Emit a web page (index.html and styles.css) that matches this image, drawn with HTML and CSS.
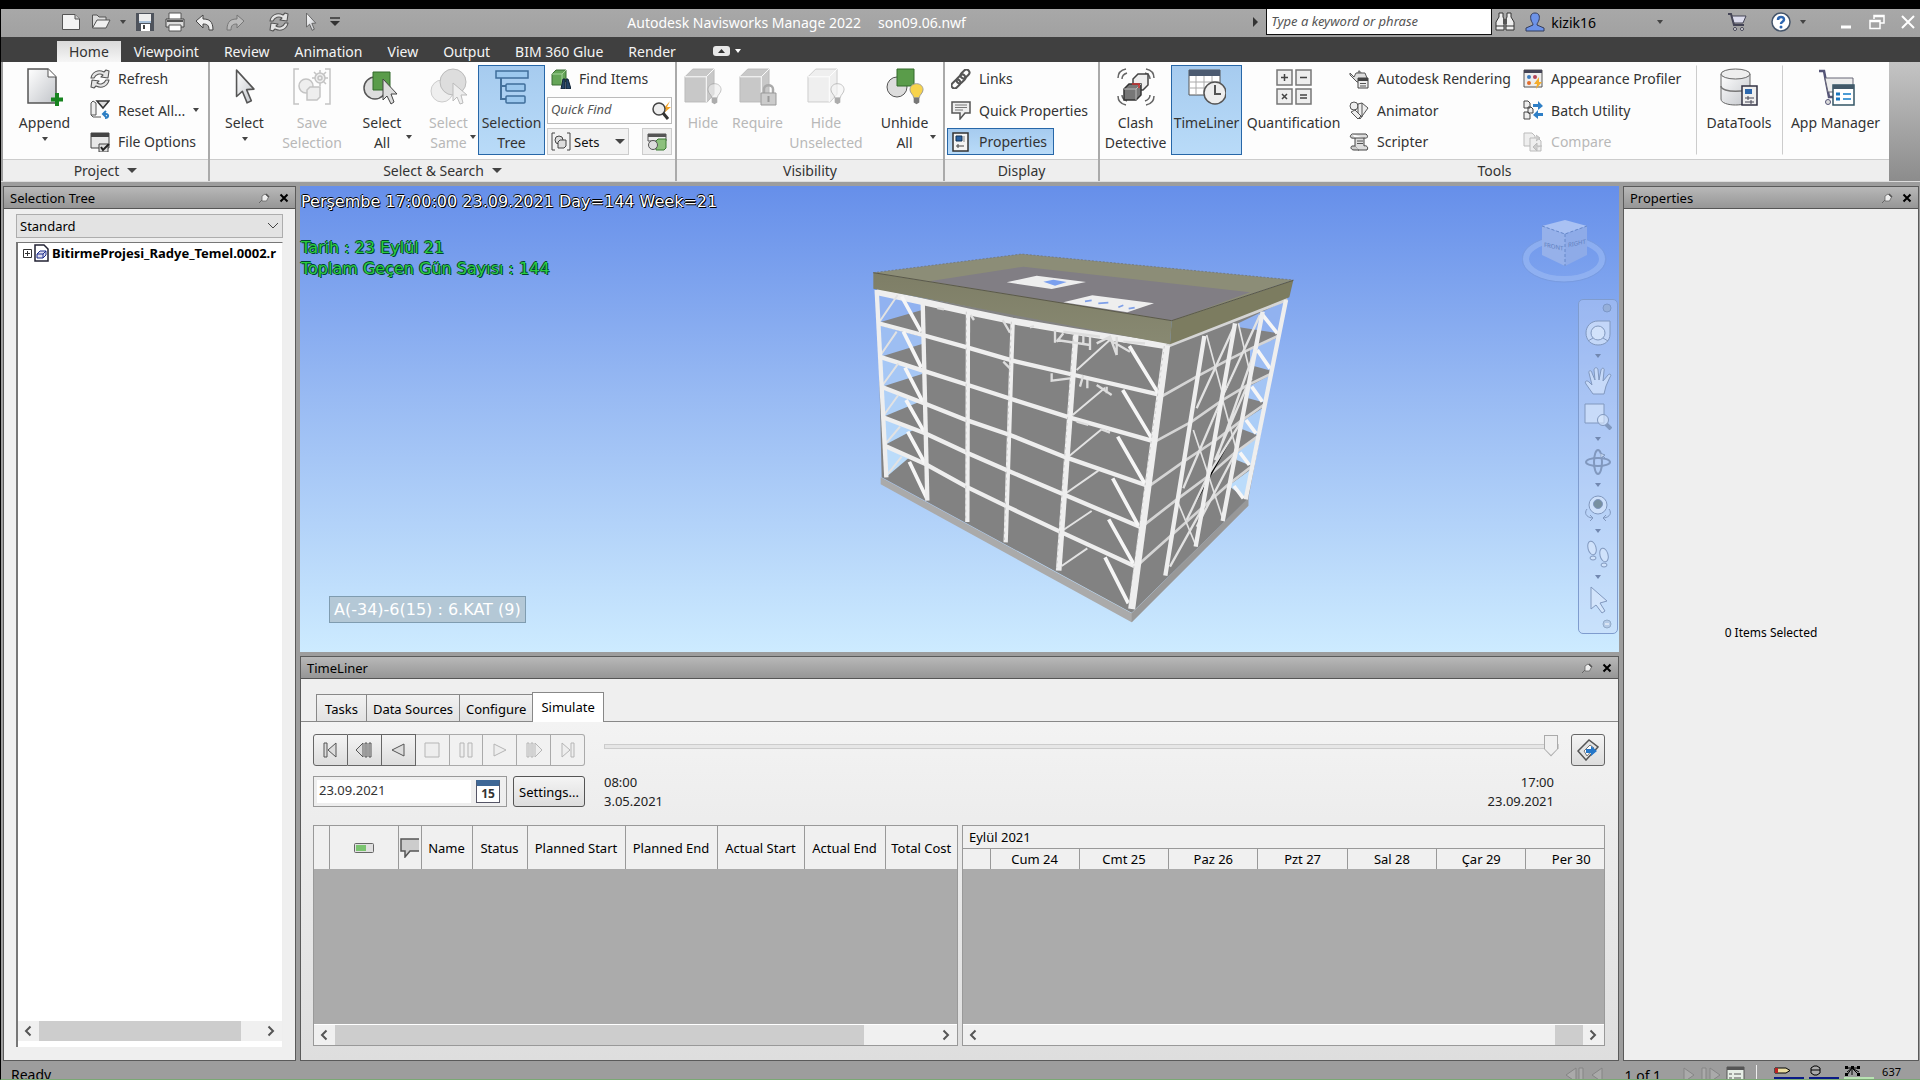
FILE: index.html
```html
<!DOCTYPE html>
<html lang="en">
<head>
    <meta charset="UTF-8">
    <meta name="viewport" content="width=device-width, initial-scale=1.0">
    <title>Autodesk Navisworks Manage 2022</title>
    <link rel="stylesheet" href="styles.css">
</head>

<body>
    <!-- shared icons -->
    <svg class="defs" width="0" height="0">
        <defs>
            <linearGradient id="steel" x1="0" y1="0" x2="1" y2="1">
                <stop offset="0" stop-color="#fff"/><stop offset="1" stop-color="#c2c5ca"/>
            </linearGradient>
            <linearGradient id="olive" x1="0" y1="0" x2="0" y2="1">
                <stop offset="0" stop-color="#7e7e66"/><stop offset="1" stop-color="#888972"/>
            </linearGradient>
        </defs>
        <symbol id="refresh" viewBox="0 0 20 20">
            <g fill="#e4e4e4" stroke="#555" stroke-width="1.1" stroke-linejoin="round">
                <path d="M1 9C2 3 8 0 14 3L16 1L19 2L18 9L11 8L13 6C10 4 6 5 4 9Z"/>
                <path d="M19 11C18 17 12 20 6 17L4 19L1 18L2 11L9 12L7 14C10 16 14 15 16 11Z"/>
            </g>
        </symbol>
        <symbol id="cursor" viewBox="0 0 20 36">
            <path d="M2 2L2 27L7.500 22L12 33L16 31L11.500 20.500L18.500 20Z" fill="url(#steel)" stroke="#555" stroke-width="1.500" stroke-linejoin="round"/>
        </symbol>
        <symbol id="pin" viewBox="0 0 12 12">
            <path d="M1 11L4.500 7.500" stroke="#666" stroke-width="1"/>
            <path d="M4 4L7 2L10.500 5L8.500 9L4 9Z" fill="#eee" stroke="#666" stroke-width=".8"/>
            <path d="M8 2L11 5" stroke="#555" stroke-width="1.500"/>
        </symbol>
        <symbol id="close" viewBox="0 0 10 10">
            <path d="M1.500 1.500L8.500 8.500M8.500 1.500L1.500 8.500" stroke="#000" stroke-width="2"/>
        </symbol>
        <symbol id="bulb" viewBox="0 0 16 24">
            <path d="M8 1C3.500 1 1 4 1 7.500C1 11 5 13 5 16H11C11 13 15 11 15 7.500C15 4 12.500 1 8 1Z" stroke="#999"/>
            <path d="M5 16H11V21L8 23L5 21Z" fill="#777"/>
        </symbol>
        <symbol id="cube" viewBox="0 0 32 36">
            <path d="M1 9L9 1H31V27L24 35H1Z" stroke-linejoin="round"/>
            <path d="M1 9H23M23 9L31 1M23 9V35" fill="none" stroke="#fff"/>
        </symbol>
        <symbol id="left" viewBox="0 0 10 12">
            <path d="M7.500 1.500L3 6L7.500 10.500" fill="none" stroke="#555" stroke-width="2"/>
        </symbol>
        <symbol id="right" viewBox="0 0 10 12">
            <path d="M2.500 1.500L7 6L2.500 10.500" fill="none" stroke="#555" stroke-width="2"/>
        </symbol>
    </svg>

    <header class="titlebar">
        <div class="quick">
            <button class="tool" aria-label="New"><svg width="20" height="20"><path d="M1.500 2.500H14L18.500 7V17.500H1.500Z" fill="#f4f4f4" stroke="#555"/><path d="M14 2.500V7H18.500" fill="#ccc" stroke="#555"/></svg></button>
            <button class="tool" aria-label="Open"><svg width="20" height="20"><path d="M1.500 16V3H6L8 5H15V8" fill="#ddd" stroke="#555"/><path d="M1.500 16L6 8H19L15 16Z" fill="#f0f0f0" stroke="#555"/></svg></button>
            <span class="caret open-caret"></span>
            <button class="tool" aria-label="Save"><svg width="20" height="20"><path d="M1 1H19V19H1Z" fill="#4e535c"/><path d="M4 2H16V9H4Z" fill="#eee"/><path d="M6 12H15V19H6Z" fill="#fff"/><path d="M8 13H10V17H8Z" fill="#444"/><path d="M4 9H16V11H4Z" fill="#a8c0d8"/></svg></button>
            <button class="tool" aria-label="Print"><svg width="20" height="20"><path d="M4 1H16V8H4Z" fill="#fff" stroke="#555"/><path d="M1 7H19V15H1Z" fill="#ddd" stroke="#444"/><path d="M4 13H16V19H4Z" fill="#fff" stroke="#555"/><path d="M2 9H18" stroke="#555" stroke-width="2"/></svg></button>
            <button class="tool" aria-label="Undo"><svg width="20" height="20"><path d="M1 9L8 3V7C14 7 18 9 18 18H14C14 13 12 12 8 12V16Z" fill="#eee" stroke="#444"/></svg></button>
            <button class="tool" aria-label="Redo"><svg width="20" height="20"><path d="M19 9L12 3V7C6 7 2 9 2 18H6C6 13 8 12 12 12V16Z" fill="#bbb" stroke="#777"/></svg></button>
            <button class="tool refresh-tool" aria-label="Refresh"><svg width="20" height="20"><use href="#refresh"/></svg></button>
            <button class="tool" aria-label="Select"><svg width="24" height="20"><use href="#cursor"/></svg></button>
            <button class="tool customize" aria-label="Customize"><svg width="12" height="12"><path d="M1 2H11" stroke="#333" stroke-width="1.500"/><path d="M1 5H11L6 10Z" fill="#333"/></svg></button>
        </div>
        <h1 class="title"><span>Autodesk Navisworks Manage 2022</span><span>son09.06.nwf</span></h1>
        <div class="account">
            <svg width="8" height="12"><path d="M1 1L6 6L1 11Z" fill="#333"/></svg>
            <input class="keyword" type="search" placeholder="Type a keyword or phrase" aria-label="Keyword or phrase">
            <button class="tool" aria-label="Search"><svg width="20" height="20"><path d="M4 1H8V5L9 7V18H1V10L4 5ZM12 1H16V5L19 10V18H11V7L12 5Z" fill="#eee" stroke="#333"/><path d="M8 7H12V12H8Z" fill="#555"/><path d="M1 14H9M11 14H19" stroke="#333"/></svg></button>
            <button class="user"><svg width="20" height="20"><path d="M10 1C6 1 5 4 6 8C6.500 10 8 11 8 13L1 16V19H19V16L12 13C12 11 13.500 10 14 8C15 4 14 1 10 1Z" fill="#6d93e8" stroke="#333c5c"/></svg>kizik16</button>
            <span class="caret user-caret"></span>
            <button class="tool" aria-label="App store"><svg width="20" height="20"><path d="M1 2H4L7 13H17" fill="none" stroke="#445" stroke-width="2"/><path d="M5 4H19L16 11H7Z" fill="#dde" stroke="#445"/><circle cx="8" cy="17" r="1.500" fill="#eee" stroke="#445"/><circle cx="15" cy="17" r="1.500" fill="#eee" stroke="#445"/></svg></button>
            <button class="tool help" aria-label="Help"><svg width="20" height="20"><circle cx="10" cy="10" r="9" fill="#fff" stroke="#44546a" stroke-width="1.500"/><path d="M7 8C7 4 13 4 13 7.500C13 10 10 9.500 10 12" fill="none" stroke="#2e66b0" stroke-width="2.500"/><circle cx="10" cy="15" r="1.500" fill="#2e66b0"/></svg></button>
            <span class="caret"></span>
            <button class="tool win" aria-label="Minimize"><svg width="16" height="16"><path d="M3 13H13" stroke="#fff" stroke-width="3"/></svg></button>
            <button class="tool win" aria-label="Restore"><svg width="16" height="16"><path d="M5 5V1.500H15V9H11M5 2.500H15M1 6.500H11V14.500H1ZM1 7.500H11" fill="none" stroke="#fff" stroke-width="1.500"/></svg></button>
            <button class="tool win" aria-label="Close"><svg width="16" height="16"><path d="M2 2L14 14M14 2L2 14" stroke="#fff" stroke-width="2"/></svg></button>
        </div>
    </header>

    <nav class="tabs">
        <a class="tab active" href="#home">Home</a>
        <a class="tab" href="#viewpoint">Viewpoint</a>
        <a class="tab" href="#review">Review</a>
        <a class="tab" href="#animation">Animation</a>
        <a class="tab" href="#view">View</a>
        <a class="tab" href="#output">Output</a>
        <a class="tab" href="#glue">BIM 360 Glue</a>
        <a class="tab" href="#render">Render</a>
        <button class="tool collapse" aria-label="Minimize ribbon"><svg width="28" height="10"><rect x="0" y="0" width="17" height="10" rx="3" fill="#e8e8e8"/><path d="M5 7L8.500 3L12 7Z" fill="#333"/><path d="M22 3H28L25 7Z" fill="#fff"/></svg></button>
    </nav>

    <div class="ribbon">
        <section class="group">
            <div class="group-body">
                <button class="big append">
                    <svg width="38" height="38"><path d="M2 1H22L30 9V35H2Z" fill="url(#steel)" stroke="#555" stroke-width="1.500"/><path d="M22 1V9H30" fill="#fff" stroke="#555"/><path d="M31 25V38M25 31.500H37" stroke="#17841f" stroke-width="4"/></svg>
                    <span>Append</span><i class="caret"></i>
                </button>
                <div class="stack">
                    <button class="small"><svg width="20" height="20"><use href="#refresh"/></svg>Refresh</button>
                    <button class="small"><svg width="20" height="20"><path d="M1 3L3 1L6 3V15H1Z" fill="#eee" stroke="#555"/><path d="M1 15L3 17H11" fill="none" stroke="#555"/><path d="M7 1H19L13 8Z" fill="#ddd" stroke="#333" stroke-width="1.500"/><path d="M13 14H16C19 14 19 18 15 18M16 11L13 14L16 17" fill="none" stroke="#2d7fc4" stroke-width="2"/></svg>Reset All...<i class="caret"></i></button>
                    <button class="small"><svg width="20" height="20"><path d="M1 1H19V16H1Z" fill="#e8e8e8" stroke="#444"/><path d="M1 1H19V5H1Z" fill="#444"/><path d="M9 12H18V20H9Z" fill="#ddd" stroke="#444"/><path d="M11 15L13 18L19 12" fill="none" stroke="#222" stroke-width="2"/></svg>File Options</button>
                </div>
            </div>
            <h2 class="group-name">Project<i class="caret wide"></i></h2>
        </section>

        <section class="group">
            <div class="group-body">
                <button class="big select"><svg width="38" height="38"><use href="#cursor"/></svg><span>Select</span><i class="caret"></i></button>
                <button class="big save-selection" disabled>
                    <svg width="38" height="38" fill="#eee" stroke="#c4c4c4" stroke-width="1.500"><path d="M6 1H1V36H6M32 1H37V36H32" fill="none"/><circle cx="13" cy="18" r="7"/><path d="M14 22L17 19H27V29L24 32H14Z"/><circle cx="27" cy="10" r="5"/><circle cx="27" cy="10" r="2"/><path d="M27 2V5M27 15V18M19 10H22M32 10H35M21 4L24 7M30 13L33 16M33 4L30 7"/></svg>
                    <span>Save<br>Selection</span>
                </button>
                <button class="big select-all">
                    <svg width="38" height="38"><circle cx="12" cy="20" r="11" fill="#ddd" stroke="#555" stroke-width="1.500"/><path d="M10 4H27V22H10Z" fill="#5a9c4a" stroke="#336b2a"/><path d="M20 11V32L24 28L28 36L31 34L28 26H34Z" fill="#ddd" stroke="#444"/></svg>
                    <span>Select<br>All</span><i class="caret side"></i>
                </button>
                <button class="big select-same" disabled>
                    <svg width="38" height="38"><circle cx="12" cy="23" r="11" fill="#eee" stroke="#ccc"/><circle cx="23" cy="14" r="13" fill="#ddd" stroke="#bbb"/><path d="M23 15V33L27 29L30 36L33 35L31 27H37Z" fill="#eee" stroke="#bbb"/></svg>
                    <span>Select<br>Same</span><i class="caret side"></i>
                </button>
                <button class="big tree on">
                    <svg width="38" height="38"><path d="M8 8V31H16M8 18H16" fill="none" stroke="#44719c" stroke-width="2"/><g fill="#9cc8ee" stroke="#3f6d9a" stroke-width="1.500"><rect x="3" y="3" width="32" height="7"/><rect x="13" y="16" width="19" height="7" rx="1"/><rect x="13" y="28" width="19" height="7" rx="1"/></g></svg>
                    <span>Selection<br>Tree</span>
                </button>
                <div class="search-tools">
                    <button class="small"><svg width="20" height="20"><path d="M1 5L5 1H15V12L11 16H1Z" fill="#65a558" stroke="#3b6c35"/><path d="M1 5H11L15 1M11 5V16" fill="none" stroke="#a8d29d"/><path d="M10 20L12 10H14V20ZM15 20V10H17L20 20Z" fill="#246" stroke="#123"/></svg>Find Items</button>
                    <div class="quick-find">
                        <input type="text" placeholder="Quick Find" aria-label="Quick Find">
                        <button class="tool" aria-label="Find"><svg width="20" height="20"><path d="M19 1L12 9H15L13 13L20 7H16Z" fill="#f3a52a"/><circle cx="8" cy="9" r="6" fill="#eee" stroke="#444" stroke-width="1.500"/><path d="M12 13L17 19" stroke="#333" stroke-width="3"/></svg></button>
                    </div>
                    <div class="sets-row">
                        <button class="sets"><svg width="20" height="20" fill="#ddd" stroke="#444"><path d="M4 1H1V18H4M16 1H19V18H16" fill="none"/><circle cx="8" cy="8" r="4"/><path d="M7 10L9 8H15V14L13 16H7Z"/></svg>Sets<i class="caret wide"></i></button>
                        <button class="inspector" aria-label="Selection inspector"><svg width="20" height="20"><path d="M1 2H19V9H1Z" fill="#eee" stroke="#555"/><path d="M1 2H19V5H1Z" fill="#555"/><path d="M9 9L11 7H19V16L17 18H9Z" fill="#8cc07c" stroke="#3c7a34"/><circle cx="6" cy="13" r="4.500" fill="#ddd" stroke="#555"/></svg></button>
                    </div>
                </div>
            </div>
            <h2 class="group-name">Select &amp; Search<i class="caret wide"></i></h2>
        </section>

        <section class="group">
            <div class="group-body">
                <button class="big hide" disabled><svg width="38" height="38"><use href="#cube" width="31" height="35" fill="#c8c8c8" stroke="#bbb"/><use href="#bulb" x="23" y="14" width="15" height="24" fill="#eee" opacity=".6"/></svg><span>Hide</span></button>
                <button class="big require" disabled><svg width="38" height="38"><use href="#cube" width="31" height="35" fill="#c8c8c8" stroke="#bbb"/><path d="M25 26V21C25 16 34 16 34 21V26" fill="none" stroke="#aaa" stroke-width="2.500"/><path d="M22 25H37V37H22Z" fill="#ccc" stroke="#999"/><path d="M29.500 28V34" stroke="#999" stroke-width="2"/></svg><span>Require</span></button>
                <button class="big unselected" disabled><svg width="38" height="38"><use href="#cube" width="31" height="35" fill="#efefef" stroke="#ccc"/><use href="#bulb" x="23" y="14" width="15" height="24" fill="#f6f6f6" opacity=".6"/></svg><span>Hide<br>Unselected</span></button>
                <button class="big unhide"><svg width="38" height="38"><circle cx="11" cy="19" r="10" fill="#ddd" stroke="#555"/><path d="M11 1H28V18H11Z" fill="#5a9c4a" stroke="#336b2a"/><use href="#bulb" x="23" y="14" width="15" height="24" fill="#f7d34c"/></svg><span>Unhide<br>All</span><i class="caret side"></i></button>
            </div>
            <h2 class="group-name">Visibility</h2>
        </section>

        <section class="group">
            <div class="group-body display">
                <div class="stack">
                    <button class="small"><svg width="20" height="20" fill="none" stroke="#555" stroke-width="2"><rect x="9" y="2" width="10" height="6" rx="3" transform="rotate(-45 14 5)"/><rect x="5" y="7" width="10" height="6" rx="3" transform="rotate(-45 10 10)"/><rect x="0" y="12" width="10" height="6" rx="3" transform="rotate(-45 5 15)"/></svg>Links</button>
                    <button class="small"><svg width="20" height="20"><path d="M1 2H19V13H14L9 19V13H1Z" fill="#eee" stroke="#555" stroke-width="1.500"/><path d="M4 5H16M4 7.500H16M4 10H12" stroke="#777"/></svg>Quick Properties</button>
                    <button class="small on"><svg width="20" height="20"><path d="M2 1H17V19H2Z" fill="#f4f4f4" stroke="#333" stroke-width="1.500"/><path d="M5 4H11V9H5Z" fill="#2b62a4" stroke="#135"/><path d="M13 4V10" stroke="#888"/><path d="M5 14H13M7 12V16" stroke="#444"/></svg>Properties</button>
                </div>
            </div>
            <h2 class="group-name">Display</h2>
        </section>

        <section class="group grow">
            <div class="group-body">
                <button class="big clash"><svg width="38" height="38"><g fill="none" stroke="#666" stroke-width="1.500"><path d="M1 10C1 5 4 2 9 1M5 11C5 8 7 6 10 5M37 10C37 5 34 2 29 1M33 11C33 8 31 6 28 5M1 28C1 33 4 36 9 37M5 27C5 30 7 32 10 33M37 28C37 33 34 36 29 37M33 27C33 30 31 32 28 33"/></g><path d="M16 11L21 6H31V17L26 22H16Z" fill="#eee" stroke="#444" stroke-width="1.500"/><path d="M7 21L12 16H24V27L19 32H7Z" fill="#777" stroke="#333" stroke-width="1.500"/><path d="M7 21H19L24 16M19 21V32" fill="none" stroke="#bbb"/><path d="M15 16H22V20" fill="none" stroke="#c33" stroke-width="1.500"/></svg><span>Clash<br>Detective</span></button>
                <button class="big timeliner on"><svg width="38" height="38"><path d="M1 2H32V27H1Z" fill="#fff" stroke="#555"/><path d="M1 2H32V8H1Z" fill="#4b5a70"/><path d="M1 14H32M1 20H32M8 8V27M16 8V27M24 8V27" stroke="#aaa"/><circle cx="27" cy="25" r="11" fill="#eee" stroke="#555" stroke-width="1.500"/><path d="M27 17V26H33" fill="none" stroke="#555" stroke-width="2"/></svg><span>TimeLiner</span></button>
                <button class="big quantification"><svg width="38" height="38"><g fill="#eee" stroke="#777" stroke-width="1.500"><path d="M2 2H17V17H2ZM21 2H36V17H21ZM2 21H17V36H2ZM21 21H36V36H21Z"/><path d="M9.500 6V13M6 9.500H13M25 9.500H32M7 26L12 31M12 26L7 31M25 27H32M25 30H32" stroke="#444"/></g></svg><span>Quantification</span></button>
                <div class="stack first">
                    <button class="small"><svg width="20" height="20"><path d="M1 4L5 8L7 4H16L18 9V13H8L1 6Z" fill="#ddd" stroke="#555"/><path d="M10 1L13 4H8Z" fill="#777"/><path d="M9 9H19V19H9Z" fill="#eee" stroke="#444"/><path d="M9 9H19V12H9Z" fill="#444"/><path d="M11 14.500H17M11 17H17" stroke="#555"/></svg>Autodesk Rendering</button>
                    <button class="small"><svg width="20" height="20" fill="#eee" stroke="#555"><circle cx="5" cy="6" r="4"/><path d="M9 4L13 3V17L9 15ZM13 3L19 8L11 19L6 14"/><path d="M2 12L6 10L12 16L9 19Z"/></svg>Animator</button>
                    <button class="small"><svg width="20" height="20"><path d="M3 2H17C20 4 18 7 16 6H6V14L9 18H18C20 15 17 13 15 14V6" fill="#ddd" stroke="#444"/><path d="M3 2C0 4 1 7 6 6M6 14H3C1 15 2 18 5 18H10" fill="#ccc" stroke="#444"/><path d="M8 9H14M8 11.500H14" stroke="#555"/></svg>Scripter</button>
                </div>
                <div class="stack second">
                    <button class="small"><svg width="20" height="20"><path d="M1 1H19V18H1Z" fill="#eee" stroke="#555"/><path d="M1 1H19V4H1Z" fill="#445"/><circle cx="6" cy="8" r="2" fill="#3b7cc0"/><circle cx="12" cy="8" r="2" fill="#b34458"/><circle cx="6" cy="14" r="2" fill="#e36d2c"/><path d="M16 8L11 15H14L13 20L19 13H16Z" fill="#f5ad2c"/></svg>Appearance Profiler</button>
                    <button class="small"><svg width="20" height="20"><path d="M1 1H5L7 3V8H1ZM1 12H5L7 14V19H1ZM5 7H8L10 9V13H5Z" fill="#eee" stroke="#444"/><path d="M10 4H15V1L20 6L15 10V7H10ZM20 13H15V10L10 15L15 19V16H20Z" fill="#2f7fc6"/></svg>Batch Utility</button>
                    <button class="small" disabled><svg width="20" height="20" fill="#eee" stroke="#bbb"><path d="M1 1H9L12 4V14H1Z"/><path d="M7 6H15L18 9V19H7Z"/><path d="M13 3L17 6L13 9M19 14H14V11L10 15L14 19V16" fill="#ccc"/></svg>Compare</button>
                </div>
                <button class="big data-tools"><svg width="38" height="38"><path d="M1 6V31C1 39 30 39 30 31V6" fill="url(#steel)" stroke="#666"/><ellipse cx="15.500" cy="6" rx="14.500" ry="5" fill="#eee" stroke="#666"/><path d="M1 18C1 25 30 25 30 18" fill="none" stroke="#777" stroke-width="1.500"/><path d="M22 18H37V37H22Z" fill="#eee" stroke="#334" stroke-width="1.500"/><path d="M25 21H32V26H25Z" fill="#2d68ae"/><path d="M25 30H34M25 34H34M28 28V32M31 32V36" stroke="#445"/></svg><span>DataTools</span></button>
                <button class="big app-manager"><svg width="38" height="38"><path d="M2 3H7L12 29H18" fill="none" stroke="#557" stroke-width="2.500"/><path d="M8 10H36V24H11Z" fill="#eee" stroke="#667"/><circle cx="11" cy="34" r="2.500" fill="#ddd" stroke="#557"/><path d="M16 17H37V37H16Z" fill="#fff" stroke="#356" stroke-width="1.500"/><path d="M16 17H37V21H16Z" fill="#435a6a"/><path d="M19 26H23M19 31H23" stroke="#1976bd" stroke-width="3"/><path d="M26 26H34M26 31H34" stroke="#4b9bd5" stroke-width="2"/></svg><span>App Manager</span></button>
            </div>
            <h2 class="group-name">Tools</h2>
        </section>
        <div class="ribbon-end"></div>
    </div>

    <main class="workspace">
        <aside class="panel tree-panel">
            <div class="panel-title"><h3>Selection Tree</h3><button class="tool" aria-label="Auto hide"><svg width="12" height="12"><use href="#pin"/></svg></button><button class="tool" aria-label="Close"><svg width="10" height="10"><use href="#close"/></svg></button></div>
            <div class="tree-content">
                <select class="tree-mode" aria-label="Tree mode"><option>Standard</option></select>
                <div class="tree-box">
                    <div class="tree-row">
                        <svg width="9" height="9" fill="none" stroke="#333"><path d="M.5 .5H8.500V8.500H.5ZM2 4.500H7M4.500 2V7"/></svg>
                        <svg width="15" height="18"><path d="M1 1H10L14 5V17H1Z" fill="#fff" stroke="#223" stroke-width="1.500"/><path d="M3 10L6 7H12V11L9 14H3ZM3 10H9V14M9 10L12 7" fill="#dde" stroke="#1d2c8c"/></svg>
                        <span>BitirmeProjesi_Radye_Temel.0002.r</span>
                    </div>
                    <div class="scrollbar">
                        <button class="arrow" aria-label="Scroll left"><svg width="10" height="12"><use href="#left"/></svg></button>
                        <div class="track"><div class="thumb tree-thumb"></div></div>
                        <button class="arrow" aria-label="Scroll right"><svg width="10" height="12"><use href="#right"/></svg></button>
                    </div>
                </div>
            </div>
        </aside>

        <div class="center">
            <section class="scene">
                <p class="overlay-line">Perşembe 17:00:00 23.09.2021 Day=144 Week=21</p>
                <p class="overlay-line green first-green">Tarih : 23 Eylül 21</p>
                <p class="overlay-line green">Toplam Geçen Gün Sayısı : 144</p>
                <svg class="building" width="470" height="400" viewBox="0 0 1410 1200">
                    <path d="M92 712L845 1120L1195 775V797L845 1147L92 733Z" fill="#aaa"/>
                    <path d="M845 1120L1195 775V797L845 1147Z" fill="#989898"/>
                    <path d="M95 712L82 150L965 305L1308 180L1195 775L845 1118Z" fill="#828282"/>
                    <!-- sky seen through the open end bays, slabs stay between -->
                    <path d="M82 150L216 180V210L84 248Z" fill="#91b2f0"/>
                    <path d="M86 255L216 290V312L92 350Z" fill="#9dbef2"/>
                    <path d="M92 355L216 395V402L96 440Z" fill="#a6c7f5"/>
                    <path d="M97 445L205 487L100 530Z" fill="#afd0f7"/>
                    <path d="M102 535L190 570L104 615Z" fill="#b3d5f9"/>
                    <path d="M106 622L175 655L108 712Z" fill="#bbdcfa"/>
                    <path d="M1165 250L1305 182L1288 280L1168 262Z" fill="#91b2f0"/>
                    <path d="M1200 328L1288 290L1267 393L1200 375Z" fill="#9bbcf3"/>
                    <path d="M1195 440L1262 405L1245 488L1195 475Z" fill="#a4c5f5"/>
                    <path d="M1175 545L1243 500L1222 585L1175 567Z" fill="#abcdf7"/>
                    <path d="M1155 640L1220 595L1203 677L1160 660Z" fill="#b3d5f9"/>
                    <path d="M1135 738L1203 688L1189 778L1140 740Z" fill="#bbdcfb"/>
                    <g fill="none" stroke="#eee" stroke-width="13" stroke-linejoin="round">
                        <path d="M80 155L218 185L354 215L488 243L677 275L950 318" stroke-width="20"/>
                        <path d="M83 249L218 285L354 323L488 362L673 405L937 466"/>
                        <path d="M88 350L219 392L354 435L484 477L660 533L915 605"/>
                        <path d="M94 440L222 490L354 542L480 585L650 653L895 738"/>
                        <path d="M99 532L225 580L354 640L476 693L640 763L873 862"/>
                        <path d="M104 617L228 673L353 742L472 800L630 875L858 980"/>
                    </g>
                    <g fill="none" stroke="#d5d5d5" stroke-width="8">
                        <path d="M950 318L1312 177" stroke-width="13"/>
                        <path d="M937 468L1040 410L1130 362L1210 322L1290 285"/>
                        <path d="M915 605L1025 545L1115 482L1190 437L1265 400"/>
                        <path d="M895 740L1005 662L1098 600L1170 545L1245 492"/>
                        <path d="M873 862L985 775L1075 708L1150 642L1222 590"/>
                        <path d="M858 980L965 885L1055 805L1130 737L1204 680"/>
                    </g>
                    <!-- diagonal braces -->
                    <g stroke="#f6f6f6" stroke-width="11">
                        <path d="M155 170L213 275M160 275L214 383M165 383L218 485M168 480L222 575M173 575L225 670M178 665L230 775"/>
                        <path d="M838 318L925 460M818 450L907 598M803 590L885 732M788 715L865 857M776 838L850 970M765 952L835 1090"/>
                        <path d="M1238 225L1282 280M1222 330L1260 385M1205 440L1237 485M1188 540L1218 580M1170 638L1198 675M1152 738L1180 775"/>
                    </g>
                    <g stroke="#e2e2e2" stroke-width="6">
                        <path d="M90 243L143 165M92 345L140 275M98 435L145 370M102 525L145 465M106 612L150 560M115 700L155 650"/>
                        <path d="M680 390L785 295M668 525L765 443M655 650L755 568M640 765L745 692M640 870L725 813M635 978L712 925"/>
                        <path d="M1070 285L1120 470M1165 250L1205 420M1118 480L1162 640M1030 570L1075 705M1075 705L1120 842M985 790L1037 915" stroke-width="5"/>
                        <path d="M1230 225L1120 465L1000 745M1150 265L1040 505M1215 330L1098 660M1190 440L1095 660M1170 550L1075 705L1010 840M1150 650L1040 860M1060 800L960 980" stroke-width="7"/>
                    </g>
                    <!-- columns -->
                    <g stroke="#eee" stroke-width="13">
                        <path d="M80 150L109 712"/><path d="M218 182L232 782"/><path d="M354 212L352 846"/><path d="M488 242L467 907"/>
                        <path d="M678 275L626 992" stroke-width="17"/>
                        <path d="M1063 288L946 1007M1155 250L1037 920M1238 215L1118 843M1308 180L1187 778"/>
                        <path d="M950 316L845 1107" stroke-width="21"/>
                    </g>
                    <path d="M943 318L835 1100M671 280L620 985M484 245L463 900M349 215L347 840" stroke="#aaa" stroke-width="1.500" stroke-dasharray="8 10"/>
                    <!-- stair steel -->
                    <g stroke="#ddd" stroke-width="7" fill="none">
                        <path d="M615 270V308M640 280L620 305M620 300L720 315M640 275L750 290M700 280V315M720 290V330M740 310L780 290L800 345M770 295L840 335M800 290V345M820 305L885 310"/>
                        <path d="M605 400V422L660 415M700 405L690 440M712 420V445M740 435L785 465M770 440V460M680 545L715 555M755 568L780 578"/>
                        <path d="M458 240L480 278M362 225L372 240M460 365L480 385M540 262L552 258M262 204L282 208"/>
                    </g>
                    <!-- parapet and roof -->
                    <path d="M70 98L515 42L1330 120L965 242Z" fill="#8c8d77"/>
                    <path d="M238 124L520 80L1200 157L965 242Z" fill="#817e84"/>
                    <path d="M70 98L965 242L960 313L70 146Z" fill="url(#olive)"/>
                    <path d="M965 242L1330 121L1318 172L960 313Z" fill="#7c7c60"/>
                    <path d="M70 98L965 242L1330 121" fill="none" stroke="#5b5948" stroke-width="3"/>
                    <path d="M70 98L515 42L1330 120" fill="none" stroke="#6d7070" stroke-width="2" stroke-dasharray="6 5"/>
                    <path d="M470 127L560 107L708 126L605 147Z" fill="#eee"/>
                    <path d="M580 125L610 119L650 126L615 137Z" fill="#7ba0ef"/>
                    <path d="M640 187L727 166L912 190L832 217Z" fill="#eee"/>
                    <path d="M705 184L725 181M745 190L775 188M805 202L820 196M836 206L854 203" stroke="#7e9fe8" stroke-width="5"/>
                </svg>
                <svg class="view-cube" width="86" height="64">
                    <ellipse cx="42" cy="40" rx="38" ry="20" fill="none" stroke="#a1bdf4" stroke-width="6" opacity=".55"/>
                    <ellipse cx="42" cy="40" rx="42" ry="23" fill="none" stroke="#789be0"/>
                    <path d="M20 7L43 1L65 7L43 15Z" fill="#a9c1f3"/><path d="M20 7L43 15V47L20 36Z" fill="#96b1ea"/><path d="M65 7L43 15V47L65 36Z" fill="#8eabe8"/>
                    <path d="M20 7L43 15L65 7M43 15V47" fill="none" stroke="#6788c8" stroke-dasharray="3 2"/>
                    <text x="22" y="28" font-size="6" fill="#6080c0" transform="skewY(12) translate(0 -5)">FRONT</text><text x="46" y="28" font-size="6" fill="#6080c0" transform="skewY(-12) translate(0 10)">RIGHT</text>
                </svg>
                <nav class="nav-bar" aria-label="Navigation">
                    <svg class="nav-dot" width="10" height="10"><circle cx="5" cy="5" r="4" fill="#96afd9" stroke="#7d98c8"/></svg>
                    <button aria-label="Steering wheel"><svg width="28" height="28"><path d="M14 2H26V15C26 22 21 26 14 26C7 26 2 21 2 14C2 7 7 2 14 2Z"/><circle cx="14" cy="14" r="7"/><path d="M4 22L9 19M24 22L19 19"/></svg></button>
                    <i class="caret"></i>
                    <button class="pan" aria-label="Pan"><svg width="28" height="28"><path d="M9 27L2 17C0 14 3 13 5 15L8 18L5 6C4 3 8 3 8 6L11 13L10 3C10 0 14 0 14 3L15 13L17 3C18 0 21 1 20 4L19 14L24 8C26 6 28 8 26 10L22 19L20 27Z"/></svg></button>
                    <button aria-label="Zoom window"><svg width="28" height="28"><path d="M1 2H20V21H1Z"/><path d="M22 22L27 27" stroke-width="4"/><circle cx="19" cy="18" r="5.500"/></svg></button>
                    <i class="caret"></i>
                    <button aria-label="Orbit"><svg width="28" height="28"><ellipse cx="14" cy="14" rx="4" ry="12" fill="none" stroke-width="2"/><ellipse cx="14" cy="14" rx="12" ry="4" fill="none" stroke-width="2"/><path d="M16 5L21 7L17 10M19 8L23 12"/></svg></button>
                    <i class="caret"></i>
                    <button aria-label="Look around"><svg width="28" height="28"><circle cx="14" cy="11" r="9"/><circle cx="14" cy="10" r="4.500" fill="#7890a0"/><path d="M3 15C0 19 2 23 8 24M25 15C28 19 26 23 20 24M6 21L9 24L6 27M22 21L19 24L22 27" fill="none"/></svg></button>
                    <i class="caret"></i>
                    <button aria-label="Walk"><svg width="28" height="28"><ellipse cx="8" cy="8" rx="4" ry="7" transform="rotate(-15 8 8)"/><ellipse cx="9" cy="18" rx="3" ry="2"/><ellipse cx="20" cy="15" rx="4" ry="7" transform="rotate(-15 20 15)"/><ellipse cx="20" cy="25" rx="3" ry="2"/></svg></button>
                    <i class="caret"></i>
                    <button aria-label="Pick"><svg width="28" height="28"><path d="M7 1V23L12 19L18 27L21 25L16 17L23 15Z"/></svg></button>
                    <svg class="nav-dot" width="10" height="10"><circle cx="5" cy="5" r="4" fill="#b4cae6" stroke="#93abc9"/><path d="M3 5H7" stroke="#fff"/></svg>
                </nav>
                <p class="hover-tip">A(-34)-6(15) : 6.KAT (9)</p>
            </section>

            <section class="panel timeline">
                <div class="panel-title"><h3>TimeLiner</h3><button class="tool" aria-label="Auto hide"><svg width="12" height="12"><use href="#pin"/></svg></button><button class="tool" aria-label="Close"><svg width="10" height="10"><use href="#close"/></svg></button></div>
                <div class="sub-tabs">
                    <button>Tasks</button><button>Data Sources</button><button>Configure</button><button class="current">Simulate</button>
                </div>
                <div class="simulate">
                    <div class="controls">
                        <div class="left-controls">
                            <div class="player">
                                <button aria-label="Rewind"><svg width="18" height="18"><path d="M3 2H6V16H3ZM15 2V16L7 9Z"/></svg></button>
                                <button aria-label="Step back"><svg width="18" height="18"><path d="M8 2V16L1 9ZM10 2H12V16H10ZM14 2H16V16H14Z"/></svg></button>
                                <button aria-label="Play backwards"><svg width="18" height="18"><path d="M15 3V15L3 9Z"/></svg></button>
                                <button aria-label="Stop" disabled><svg width="18" height="18"><path d="M2 2H16V16H2Z"/></svg></button>
                                <button aria-label="Pause" disabled><svg width="18" height="18"><path d="M3 2H7V16H3ZM11 2H15V16H11Z"/></svg></button>
                                <button aria-label="Play" disabled><svg width="18" height="18"><path d="M3 3V15L15 9Z"/></svg></button>
                                <button aria-label="Step forward" disabled><svg width="18" height="18"><path d="M2 2H4V16H2ZM6 2H8V16H6ZM10 2V16L17 9Z"/></svg></button>
                                <button aria-label="Forward" disabled><svg width="18" height="18"><path d="M3 2V16L11 9ZM12 2H15V16H12Z"/></svg></button>
                            </div>
                            <div class="date-row">
                                <div class="date-box">
                                    <input type="text" value="23.09.2021" aria-label="Simulation date">
                                    <button class="tool calendar" aria-label="Open calendar"><span>15</span></button>
                                </div>
                                <button class="settings">Settings...</button>
                            </div>
                        </div>
                        <div class="time-axis">
                            <input type="range" min="0" max="144" value="144" aria-label="Simulation position">
                            <div class="times">
                                <p>08:00<br>3.05.2021</p>
                                <p class="end">17:00<br>23.09.2021</p>
                            </div>
                        </div>
                        <button class="export" aria-label="Export animation"><svg width="22" height="22"><path d="M1 12L12 1L21 8L9 21Z" fill="#e4e4e4" stroke="#555" stroke-width="1.500"/><path d="M7 12L13 6L17 9L10 17Z" fill="#fff" stroke="#777"/><path d="M9 10H14V7L20 12L14 17V14H9Z" fill="#2577c9"/></svg></button>
                    </div>

                    <div class="grids">
                        <div class="grid tasks">
                            <table>
                                <colgroup><col class="c-mark"><col class="c-active"><col class="c-note"><col class="c-name"><col class="c-status"><col class="c-pstart"><col class="c-pend"><col class="c-astart"><col class="c-aend"><col></colgroup>
                                <tr>
                                    <th></th>
                                    <th><svg width="20" height="10"><rect x=".5" y=".5" width="19" height="9" rx="1" fill="#e0e0e0" stroke="#666"/><rect x="2" y="2" width="10" height="6" fill="#7ac46f"/></svg></th>
                                    <th><svg width="19" height="21"><path d="M19 2H1V14H5V20L10 14H19" fill="#ccc" stroke="#555" stroke-width="1.500"/></svg></th>
                                    <th>Name</th><th>Status</th><th>Planned Start</th><th>Planned End</th><th>Actual Start</th><th>Actual End</th><th>Total Cost</th>
                                </tr>
                            </table>
                            <div class="grid-space"></div>
                            <div class="scrollbar">
                                <button class="arrow" aria-label="Scroll left"><svg width="10" height="12"><use href="#left"/></svg></button>
                                <div class="track"><div class="thumb task-thumb"></div></div>
                                <button class="arrow" aria-label="Scroll right"><svg width="10" height="12"><use href="#right"/></svg></button>
                            </div>
                        </div>
                        <div class="grid gantt">
                            <table>
                                <colgroup><col class="c-lead"><col><col><col><col><col><col><col class="c-last"></colgroup>
                                <tr class="month"><th colspan="8">Eylül 2021</th></tr>
                                <tr class="days"><th></th><th>Cum 24</th><th>Cmt 25</th><th>Paz 26</th><th>Pzt 27</th><th>Sal 28</th><th>Çar 29</th><th>Per 30</th></tr>
                            </table>
                            <div class="grid-space"></div>
                            <div class="scrollbar">
                                <button class="arrow" aria-label="Scroll left"><svg width="10" height="12"><use href="#left"/></svg></button>
                                <div class="track end-track"><div class="thumb gantt-thumb"></div></div>
                                <button class="arrow" aria-label="Scroll right"><svg width="10" height="12"><use href="#right"/></svg></button>
                            </div>
                        </div>
                    </div>
                </div>
            </section>
        </div>

        <aside class="panel properties">
            <div class="panel-title"><h3>Properties</h3><button class="tool" aria-label="Auto hide"><svg width="12" height="12"><use href="#pin"/></svg></button><button class="tool" aria-label="Close"><svg width="10" height="10"><use href="#close"/></svg></button></div>
            <p class="nothing">0 Items Selected</p>
        </aside>
    </main>

    <footer class="status">
        <span>Ready</span>
        <div class="sheets">
            <svg width="38" height="16" fill="#aaa" stroke="#858585"><path d="M11 2V16L1 9ZM14 2H18V16H14ZM37 2V16L27 9Z"/></svg>
            <span>1 of 1</span>
            <svg width="38" height="16" fill="#aaa" stroke="#858585"><path d="M1 2V16L11 9ZM19 2H23V16H19ZM27 2V16L37 9Z"/></svg>
            <svg width="19" height="16"><path d="M1 1H18V16H1Z" fill="#e6eee6" stroke="#555"/><path d="M1 1H18V4H1Z" fill="#555"/><path d="M3 8H6M8 8H15M3 12H6M8 12H15" stroke="#555"/></svg>
        </div>
        <div class="meters">
            <svg width="30" height="16"><path d="M1 3H12L16 5.500L12 8H1Z" fill="#e9dca0" stroke="#000"/><path d="M1 3H4V8H1Z" fill="#b22"/><path d="M0 12H30V16H0Z" fill="#0a1a86"/></svg>
            <svg width="30" height="16"><path d="M2 3L5 1H8L11 3V8L8 10H5L2 8ZM2 5H11" fill="#aaa" stroke="#000"/><path d="M0 12H30V16H0Z" fill="#0a1a86"/></svg>
            <svg width="30" height="16"><path d="M3 3H15M8 3V10M3 10L8 3L15 10M3 7L8 3L15 7" fill="none" stroke="#000"/><path d="M1 1H4V4H1ZM7 1H10V4H7ZM13 1H16V4H13ZM1 8H4V11H1ZM13 8H16V11H13Z"/><path d="M0 12H30V16H0Z" fill="#b9e3b3"/></svg>
            <span>637</span>
        </div>
    </footer>
</body>

</html>
```

FILE: styles.css
```css
* {
    margin: 0;
    padding: 0;
    box-sizing: border-box;
}

body {
    height: 100vh;
    display: flex;
    flex-direction: column;
    overflow: hidden;
    background: #9d9d9d;
    border-top: 9px solid #000;
    border-left: 1px solid #000;
    border-bottom: 1px solid #7aa874;
    font-family: 'Noto Sans', sans-serif;
    font-size: 14px;
    color: #000;
}

button,
input,
select {
    font: inherit;
    color: inherit;
    background: none;
    border: none;
    outline: none;
}

button svg {
    display: block;
    flex: none;
}

h1, h2, h3 {
    font-size: inherit;
    font-weight: normal;
}

.defs {
    position: absolute;
}

.tool {
    display: flex;
    align-items: center;
    justify-content: center;
}

.caret {
    flex: none;
    border: 3px solid transparent;
    border-top: 4px solid #444;
    border-bottom: none;
}

.caret.wide {
    border-width: 5px 5px 0;
}

/* title bar */
.titlebar {
    height: 28px;
    flex: none;
    display: flex;
    align-items: center;
    background: linear-gradient(#a8a8a8, #a1a1a1);
}

.quick {
    display: flex;
    align-items: center;
    gap: 10px;
    padding-left: 60px;
    padding-bottom: 3px;
}

.quick .open-caret {
    margin: 0 -1px;
}

.refresh-tool {
    margin-left: 14px;
}

.customize {
    margin-left: -4px;
}

.title {
    flex: 1;
    display: flex;
    justify-content: center;
    gap: 17px;
    color: #fff;
    white-space: nowrap;
    line-height: 20px;
}

.account {
    display: flex;
    align-items: center;
    align-self: stretch;
    padding-bottom: 2px;
}

.keyword {
    width: 226px;
    height: 26px;
    margin: 0 3px 0 6px;
    padding: 0 4px 1px;
    background: #fff;
    border: 1px solid #111;
    border-top: none;
    font-style: italic;
    font-size: 13px;
}

.keyword::placeholder,
.quick-find input::placeholder {
    color: #555;
    opacity: 1;
}

.user {
    display: flex;
    align-items: center;
    gap: 6px;
    margin-left: 10px;
}

.user-caret {
    margin: 0 64px 0 61px;
}

.help {
    margin: 0 9px 0 24px;
}

.win {
    margin-left: 15px;
}

.win:last-child {
    margin-right: 4px;
}

.help + .caret {
    margin-right: 17px;
}

/* ribbon tabs */
.tabs {
    height: 25px;
    flex: none;
    display: flex;
    align-items: flex-end;
    gap: 1px;
    padding-left: 56px;
    background: #404040;
}

.tab {
    height: 21px;
    line-height: 21px;
    padding: 0 12px;
    color: #f4f4f4;
    text-decoration: none;
}

.tab.active {
    background: linear-gradient(#d9d9d9, #f6f6f6);
    color: #333;
}

.collapse {
    height: 21px;
    margin-left: 24px;
    padding-bottom: 2px;
}

/* ribbon */
.ribbon {
    height: 120px;
    flex: none;
    display: flex;
    padding-left: 2px;
    color: #333;
    border-bottom: 1px solid #ddd;
}

.group {
    display: flex;
    flex-direction: column;
    background: #fdfdfd;
    border-right: 2px solid #aaa;
}

.group.grow {
    flex: 1;
    border-right: none;
}

.group-body {
    flex: 1;
    display: flex;
    padding: 3px 0 4px;
}

.group-body.display {
    padding: 3px 6px 4px 2px;
}

.group-name {
    height: 22px;
    display: flex;
    align-items: center;
    justify-content: center;
    gap: 8px;
    background: #eee;
    border-top: 1px solid #ccc;
}

.big {
    position: relative;
    display: flex;
    flex-direction: column;
    align-items: center;
    padding-top: 2px;
    line-height: 20px;
    white-space: nowrap;
    border: 1px solid transparent;
}

.big svg {
    margin-bottom: 7px;
}

.big .caret {
    margin-top: 4px;
}

.big .side {
    position: absolute;
    right: 6px;
    top: 65px;
}

button:disabled {
    color: #b8b8b8;
}

.on {
    background: linear-gradient(#a6cbef, #b9dbf8);
    border: 1px solid #2767a8;
}

.append { width: 83px; }
.select { width: 69px; }
.save-selection { width: 66px; }
.select-all { width: 74px; }
.select-same { width: 59px; }
.tree { width: 67px; }
.hide { width: 52px; }
.require { width: 57px; }
.unselected { width: 80px; }
.unhide { width: 77px; }
.clash { width: 71px; }
.timeliner { width: 71px; }
.quantification { width: 103px; }
.data-tools { flex: 1; border-left: 1px solid #ccc; }
.app-manager { width: 107px; border-left: 1px solid #ccc; }

.select-same .side {
    right: 1px;
}

.stack {
    display: flex;
    flex-direction: column;
    justify-content: space-between;
    align-items: flex-start;
}

.stack.first { width: 174px; }
.stack.second { width: 177px; }

.append + .stack {
    width: 122px;
}

.small {
    height: 27px;
    display: flex;
    align-items: center;
    gap: 8px;
    padding: 0 3px;
    white-space: nowrap;
    border: 1px solid transparent;
}

.small.on {
    border-color: #2767a8;
    padding-right: 6px;
}

.search-tools {
    width: 130px;
    padding: 0 3px 0 2px;
    display: flex;
    flex-direction: column;
    justify-content: space-between;
}

.quick-find {
    display: flex;
    height: 27px;
    border: 1px solid #bbb;
    background: #fff;
}

.quick-find input {
    flex: 1;
    min-width: 0;
    padding: 0 3px 2px;
    font-size: 13px;
    font-style: italic;
}

.sets-row {
    display: flex;
    justify-content: space-between;
}

.sets {
    width: 82px;
    height: 27px;
    display: flex;
    align-items: center;
    gap: 3px;
    padding: 0 3px;
    background: #f2f2f2;
    border: 1px solid #ccc;
    font-size: 13px;
    color: #111;
}

.sets .caret {
    margin-left: auto;
}

.inspector {
    width: 30px;
    height: 27px;
    display: flex;
    align-items: center;
    justify-content: center;
    background: #eee;
    border: 1px solid #ccc;
}

.ribbon-end {
    flex: none;
    width: 31px;
    background: linear-gradient(#c4c4c4, #8c8c8c);
}

/* docked panels */
.workspace {
    flex: 1;
    min-height: 0;
    display: flex;
    gap: 4px;
    padding: 4px 1px 0 2px;
    font-size: 13px;
}

.center {
    flex: 1;
    min-width: 0;
    display: flex;
    flex-direction: column;
    gap: 4px;
}

.panel {
    display: flex;
    flex-direction: column;
    background: #efefef;
    border: 1px solid #5a5a5a;
}

.panel-title {
    height: 22px;
    flex: none;
    display: flex;
    align-items: center;
    gap: 9px;
    padding: 0 6px 0 6px;
    background: linear-gradient(#b8b8b8, #969696);
    border-bottom: 1px solid #555;
}

.panel-title h3 {
    flex: 1;
}

.tree-panel {
    width: 293px;
}

.properties {
    width: 296px;
}

.tree-content {
    flex: 1;
    display: flex;
    flex-direction: column;
    gap: 4px;
    padding: 5px 12px 13px;
}

.tree-mode {
    appearance: none;
    height: 24px;
    padding: 0 3px;
    border: 1px solid #adadad;
    background: #e3e3e3 url("data:image/svg+xml,%3Csvg xmlns='http://www.w3.org/2000/svg' width='12' height='8'%3E%3Cpath d='M1 1L6 6L11 1' fill='none' stroke='%23444'/%3E%3C/svg%3E") no-repeat right 3px center;
}

.tree-box {
    flex: 1;
    display: flex;
    flex-direction: column;
    background: #fff;
    border-top: 1px solid #777;
    border-left: 2px solid #777;
    border-right: 1px solid #eee;
    padding-bottom: 6px;
}

.tree-row {
    flex: 1;
    display: flex;
    align-items: flex-start;
    gap: 2px;
    padding: 1px 0 0 5px;
    overflow: hidden;
    white-space: nowrap;
    font-size: 13px;
    font-weight: bold;
    line-height: 18px;
}

.tree-row svg {
    flex: none;
}

.tree-row svg:first-child {
    margin-top: 5px;
}

.tree-row span {
    margin-left: 1px;
}

.scrollbar {
    height: 20px;
    flex: none;
    display: flex;
    background: #f0f0f0;
}

.arrow {
    width: 21px;
    padding-right: 2px;
    display: flex;
    align-items: center;
    justify-content: center;
}

.track {
    flex: 1;
    display: flex;
}

.thumb {
    background: #cdcdcd;
}

.end-track {
    justify-content: flex-end;
}

.tree-thumb { width: 91%; }
.task-thumb { width: 88%; }
.gantt-thumb { width: 28px; }

/* 3D view */
.scene {
    position: relative;
    flex: 1;
    background: linear-gradient(#668fea, #98baf3 45%, #cdebff);
}

.overlay-line {
    font-family: 'DejaVu Sans', 'Noto Sans', sans-serif;
    font-size: 16px;
    line-height: 21px;
    padding: 5px 0 0 1px;
    color: #fff;
    text-shadow: 1px 1px #000, -1px 0 #000, 0 -1px #000;
}

.overlay-line.green {
    color: #2ccc3c;
    padding-top: 0;
    text-shadow: 1px 1px #043, -1px 0 #043, 0 -1px #043;
}

.overlay-line.first-green {
    margin-top: 25px;
}

.building {
    position: absolute;
    left: 42%;
    margin-left: -4px;
    top: 54px;
}

.view-cube {
    position: absolute;
    right: 11px;
    top: 33px;
}

.nav-bar {
    position: absolute;
    right: 1px;
    top: 113px;
    width: 40px;
    padding: 3px 5px;
    display: flex;
    flex-direction: column;
    align-items: center;
    gap: 5px;
    border: 1px solid #7f9cce;
    border-radius: 5px;
    background: rgba(200, 215, 245, 0.35);
}

.nav-bar button svg {
    fill: rgba(220, 233, 252, 0.6);
    stroke: #8198be;
}

.nav-bar .caret {
    border-top-color: #7288b0;
    margin: 2px 0;
}

.nav-bar .pan {
    margin: 2px 0;
}

.nav-dot {
    align-self: flex-end;
    margin-bottom: 1px;
}

.hover-tip {
    position: absolute;
    left: 29px;
    bottom: 29px;
    padding: 0 4px;
    border: 1px solid #7f9cb0;
    background: #b4c8d6;
    font-family: 'DejaVu Sans', 'Noto Sans', sans-serif;
    font-size: 16px;
    line-height: 25px;
    color: #fff;
}

/* timeliner */
.timeline {
    height: 405px;
}

.sub-tabs {
    display: flex;
    align-items: flex-end;
    padding: 14px 0 0 15px;
    height: 43px;
    border-bottom: 1px solid #888;
}

.sub-tabs button {
    height: 27px;
    padding: 1px 6px 0;
    background: linear-gradient(#f2f2f2, #e2e2e2);
    border: 1px solid #888;
    border-bottom: none;
    margin-right: -1px;
}

.sub-tabs button:first-child,
.sub-tabs .current {
    padding-left: 8px;
    padding-right: 8px;
}

.sub-tabs .current {
    height: 30px;
    margin-bottom: -1px;
    padding-bottom: 2px;
    background: #fff;
}

.simulate {
    flex: 1;
    display: flex;
    flex-direction: column;
    gap: 14px;
    padding: 12px 13px 14px 12px;
    background: linear-gradient(#f3f3f3, #dedede);
}

.controls {
    display: flex;
    gap: 12px;
}

.left-controls {
    width: 272px;
    flex: none;
    display: flex;
    flex-direction: column;
    gap: 10px;
}

.player {
    display: flex;
    height: 32px;
}

.player button {
    flex: 1;
    display: flex;
    align-items: center;
    justify-content: center;
    border: 1px solid #666;
    border-left-width: 0;
    background: linear-gradient(#f4f4f4, #ddd);
}

.player button:first-child {
    border-left-width: 1px;
    border-radius: 3px 0 0 3px;
}

.player button:last-child {
    border-radius: 0 3px 3px 0;
}

.player button:disabled {
    border-color: #aaa;
    background: #f1f1f1;
}

.player svg {
    fill: #ddd;
    stroke: #555;
}

.player button:disabled svg {
    fill: #eee;
    stroke: #b5b5b5;
}

.date-row {
    display: flex;
    gap: 6px;
    height: 31px;
}

.date-box {
    flex: 1;
    min-width: 0;
    display: flex;
    align-items: center;
    gap: 5px;
    padding: 3px 6px 3px 3px;
    border: 1px solid #999;
}

.date-box input {
    flex: 1;
    min-width: 0;
    height: 23px;
    padding: 0 2px 3px;
    background: #fff;
    color: #333;
}

.calendar {
    flex: none;
    width: 24px;
    height: 23px;
    border: 1px solid #556;
    border-top: 6px solid #3e6796;
    background: #fff;
    font-size: 12px;
    font-weight: bold;
    line-height: 14px;
    color: #333;
}

.settings {
    flex: none;
    width: 72px;
    border: 1px solid #555;
    border-radius: 3px;
    background: linear-gradient(#f4f4f4, #ddd);
}

.time-axis {
    flex: 1;
    padding-left: 7px;
}

.time-axis input {
    appearance: none;
    display: block;
    width: 100%;
    height: 24px;
}

.time-axis input::-webkit-slider-runnable-track {
    height: 5px;
    background: #e6e6e6;
    border: 1px solid #ccc;
}

.time-axis input::-webkit-slider-thumb {
    appearance: none;
    width: 14px;
    height: 22px;
    margin-top: -10px;
    background: #aaa url("data:image/svg+xml,%3Csvg xmlns='http://www.w3.org/2000/svg' width='14' height='22'%3E%3Cpath d='M1 1H13V14L7 20L1 14Z' fill='%23f0f0f0'/%3E%3C/svg%3E");
    clip-path: polygon(0 0, 100% 0, 100% 66%, 50% 100%, 0 66%);
}

.times {
    display: flex;
    justify-content: space-between;
    padding: 15px 5px 0 0;
    line-height: 19px;
    color: #222;
}

.times .end {
    text-align: right;
}

.export {
    flex: none;
    width: 34px;
    height: 32px;
    display: flex;
    align-items: center;
    justify-content: center;
    border: 1px solid #666;
    border-radius: 3px;
    background: linear-gradient(#f4f4f4, #ddd);
}

.grids {
    flex: 1;
    display: flex;
    gap: 4px;
}

.grid {
    display: flex;
    flex-direction: column;
    overflow: hidden;
    border: 1px solid #999;
}

.grid .scrollbar {
    height: 21px;
    border-top: 1px solid #fff;
}

.tasks {
    width: 645px;
    flex: none;
}

.gantt {
    flex: 1;
}

.grid-space {
    flex: 1;
    background: #ababab;
}

.grid table {
    width: 100%;
    table-layout: fixed;
    border-collapse: collapse;
    background: #f0f0f0;
}

.grid th {
    font-weight: normal;
    border-right: 1px solid #999;
    white-space: nowrap;
}

.grid th:last-child {
    border-right: none;
}

.tasks tr {
    height: 43px;
}

.tasks th svg {
    display: block;
    margin: 0 auto;
}

.c-mark { width: 15px; }
.c-active { width: 69px; }
.c-note { width: 23px; }
.c-name { width: 51px; }
.c-status { width: 55px; }
.c-pstart { width: 98px; }
.c-pend { width: 92px; }
.c-astart { width: 87px; }
.c-aend { width: 81px; }
.c-lead { width: 27px; }
.c-last { width: 78px; }

.month {
    height: 22px;
    border-bottom: 1px solid #999;
}

.month th {
    text-align: left;
    padding-left: 6px;
}

.days {
    height: 21px;
}

.days th:last-child {
    padding-left: 12px;
}

.nothing {
    margin: auto;
    padding-bottom: 4px;
    font-size: 12px;
}

/* status bar */
.status {
    height: 18px;
    flex: none;
    display: flex;
    align-items: flex-start;
    overflow: hidden;
    padding: 4px 19px 0 10px;
    white-space: nowrap;
    line-height: 20px;
}

.sheets {
    display: flex;
    gap: 22px;
    margin-left: auto;
    padding: 1px 11px 0 0;
    border-right: 1px solid #eee;
}

.sheets svg:last-child {
    margin-left: -17px;
}

.meters {
    display: flex;
    gap: 5px;
    padding-left: 17px;
    line-height: 14px;
    font-size: 11px;
}

.meters span {
    margin-left: 3px;
}
```
